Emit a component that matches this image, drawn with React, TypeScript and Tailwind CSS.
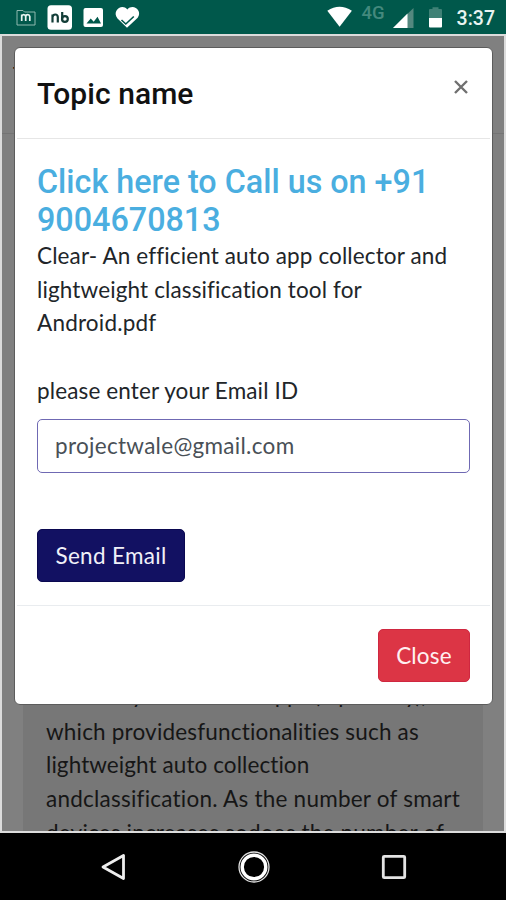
import React from "react";

function StatusBar() {
  return (
    <header className="flex h-[34px] shrink-0 items-center bg-[#00584b] pl-4 pr-[11px]">
      <svg className="h-[34px] w-[130px]" viewBox="0 0 130 34" fill="none">
        <path d="M1 10.500h6l1.500 1.500h10.500v13h-18z" stroke="#8fb9b0" strokeWidth="1" />
        <path d="M5.700 21v-6.500M5.700 16.500q.3-1.800 2-1.800t2 1.800v4.500M9.700 16.500q.4-1.800 2.100-1.800t2 1.800v4.500" stroke="#e8f4f1" strokeWidth="1.700" />
        <rect x="31.500" y="5.200" width="24.500" height="24.500" rx="3.500" fill="#fff" />
        <path d="M36.500 22.500v-8M36.500 17q.5-2.500 2.800-2.500t2.500 2.500v5.500M46.200 12v7.500" stroke="#123d37" strokeWidth="2.200" />
        <circle cx="48.900" cy="19" r="2.900" stroke="#123d37" strokeWidth="2.200" />
        <rect x="67.500" y="8" width="19.500" height="19" rx="2" fill="#fff" />
        <path d="M70.500 23.500l4.200-5 3 3.200 3.800-5 3.500 6.800z" fill="#00584b" />
        <path d="M111 27.700l-9.500-9.300c-6-6.800 4-15.500 9.800-9 6-6.500 15.500 1.500 10.400 8.300z" fill="#fff" />
        <path d="M105.500 20l4.300 4 8-7.500" stroke="#00584b" strokeWidth="1.600" />
      </svg>
      <span className="flex-1" />
      <svg className="h-[34px] w-[28px]" viewBox="0 0 28 34">
        <path d="M1.300 10.800q12.200-8.200 24.600 0L13.600 26.700z" fill="#fff" />
      </svg>
      <span className="ml-[8px] w-[25px] pb-[8px] font-['Roboto',sans-serif] text-[18.500px] font-medium leading-none text-[#44897d]">4G</span>
      <svg className="ml-[6px] h-[34px] w-[54px]" viewBox="0 0 54 34">
        <path d="M0 28L20.500 8v20z" fill="#54887f" />
        <path d="M0 28L14.500 13.500V28z" fill="#fff" />
        <path d="M36 18v-8q0-1 1-1h2.500V7.200h6V9H48q1 0 1 1v8z" fill="#3f8176" />
        <path d="M36 18h13v8.500q0 1-1 1H37q-1 0-1-1z" fill="#fff" />
      </svg>
      <span className="ml-[10px] pt-[4px] font-['Roboto',sans-serif] text-[19.500px] font-medium leading-none text-[#e8f4f1]">3:37</span>
    </header>
  );
}

function PageBehind() {
  return (
    <div className="flex h-full flex-col bg-[#808080] font-['Lato',sans-serif]">
      <p className="h-[98px] border-b border-[#747474] pl-[11px] pt-[23px] text-[22px] leading-[30px] text-black">Topics</p>
      <article className="mx-[21px] mt-[20px] flex min-h-0 flex-1 flex-col bg-[#777777] px-[23px] pt-[524px] text-[22.500px] leading-[33.700px] text-[#161616]">
        <p className="mb-[3px] flex whitespace-nowrap">
          <span className="w-[218px]">necessary mobile</span>
          <span className="tracking-[-0.400px]">apps (repository),</span>
        </p>
        <p className="whitespace-nowrap tracking-[0.180px]">which providesfunctionalities such as</p>
        <p className="whitespace-nowrap tracking-[0.080px]">lightweight auto collection</p>
        <p className="whitespace-nowrap tracking-[0.230px]">andclassification. As the number of smart</p>
        <p className="whitespace-nowrap tracking-[0.180px]">devices increases sodoes the number of</p>
      </article>
    </div>
  );
}

function TopicDialog() {
  return (
    <section className="absolute left-[12px] right-[11px] top-[11px] flex h-[658px] flex-col rounded-[6px] border border-[#5c5c5c] bg-white font-['Lato',sans-serif] text-[22.500px] leading-[33.700px] text-[#212529]">
      <header className="mx-[2px] flex h-[91px] shrink-0 items-start justify-between border-b border-[#e6e6e6] px-[20px] pt-[29px]">
        <h5 className="font-['Roboto',sans-serif] text-[30px] font-medium leading-[34px] tracking-[0.050px] text-[#111]">Topic name</h5>
        <button aria-label="Dismiss" className="mr-[2px] mt-[3px]">
          <svg className="h-[14px] w-[14px]" viewBox="0 0 14 14" stroke="#707070" strokeWidth="2.400">
            <path d="M1 1l12 12M13 1L1 13" />
          </svg>
        </button>
      </header>
      <div className="mx-[2px] flex h-[467px] shrink-0 flex-col items-start border-b border-[#e9ecef] px-[20px] pt-[24px]">
        <h3 className="whitespace-nowrap font-['Roboto',sans-serif] text-[32.300px] font-medium leading-[38px] text-[#4aaee0]">
          Click here to Call us on +91<br />9004670813
        </h3>
        <p className="whitespace-nowrap tracking-[0.130px]">Clear- An efficient auto app collector and</p>
        <p className="whitespace-nowrap tracking-[0.130px]">lightweight classification tool for</p>
        <p className="whitespace-nowrap tracking-[0.200px]">Android.pdf</p>
        <label className="mt-[34px] whitespace-nowrap tracking-[0.130px]">please enter your Email ID</label>
        <div className="mt-[11px] flex h-[54px] w-[433px] items-center rounded-[5px] border border-[#6f69b3] px-[17px] text-[#495057]">
          <span className="tracking-[0.300px]">projectwale@gmail.com</span>
        </div>
        <button className="mt-[56px] flex h-[53px] w-[148px] items-center justify-center whitespace-nowrap rounded-[5px] border border-[#0a0850] bg-[#121162] pt-[2px] tracking-[0.300px] text-[#f0f0f8]">Send Email</button>
      </div>
      <footer className="flex flex-1 items-start justify-end px-[22px] pt-[23px]">
        <button className="flex h-[53px] w-[92px] items-center justify-center rounded-[5px] border border-[#cf2740] bg-[#dc3545] tracking-[0.200px] text-[#fff0f1]">Close</button>
      </footer>
    </section>
  );
}

function NavigationBar() {
  return (
    <nav className="flex flex-1 items-center justify-between bg-black pl-[100px] pr-[98px]">
      <svg className="h-[28px] w-[28px]" viewBox="0 0 28 28" fill="none">
        <path d="M3 14L23.500 2.500v23z" stroke="#eee" strokeWidth="2.800" strokeLinejoin="round" />
      </svg>
      <svg className="h-[34px] w-[34px]" viewBox="0 0 34 34" fill="none">
        <circle cx="17" cy="17" r="15" stroke="#e4e4e4" strokeWidth="1.300" />
        <circle cx="17" cy="17" r="11.800" stroke="#fff" strokeWidth="3.400" />
      </svg>
      <svg className="h-[28px] w-[28px]" viewBox="0 0 28 28" fill="none">
        <rect x="3.300" y="3.300" width="21.400" height="21.400" rx="1" stroke="#e4e4e4" strokeWidth="2.800" />
      </svg>
    </nav>
  );
}

export default function App() {
  return (
    <div className="flex h-[900px] w-[506px] flex-col overflow-hidden bg-black">
      <StatusBar />
      <main className="relative h-[799px] shrink-0 overflow-hidden border-x-2 border-b-2 border-t-2 border-[#dcdcdc]">
        <PageBehind />
        <TopicDialog />
      </main>
      <NavigationBar />
    </div>
  );
}
